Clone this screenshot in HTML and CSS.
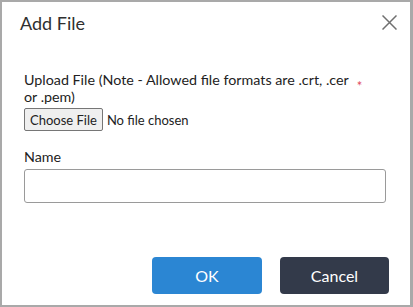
FILE: index.html
```html
<!DOCTYPE html>
<html lang="en">
<head>
    <meta charset="UTF-8">
    <meta name="viewport" content="width=device-width, initial-scale=1.0">
    <title>Add File</title>
    <link rel="stylesheet" href="styles.css">
</head>
<body>
<div class="dialog">
    <div class="dialog-header">
        <h2 class="dialog-title">Add File</h2>
        <button class="close-btn" aria-label="Close">
            <svg width="15" height="15" viewBox="0 0 15 15">
                <path d="M0.5 0.5 L14.5 14.5 M14.5 0.5 L0.5 14.5" stroke="#707070" stroke-width="1.5" fill="none"/>
            </svg>
        </button>
    </div>

    <div class="dialog-body">
        <div class="field-label-row">
            <label for="upload" class="field-label">Upload File (Note - Allowed file formats are .crt, .cer or .pem)</label>
            <span class="required">*</span>
        </div>
        <input type="file" id="upload" class="file-input">

        <label for="name" class="field-label name-label">Name</label>
        <input type="text" id="name" class="text-input">
    </div>

    <div class="dialog-footer">
        <button class="btn btn-primary">OK</button>
        <button class="btn btn-dark">Cancel</button>
    </div>
</div>
</body>
</html>
```

FILE: styles.css
```css
body {
    margin: 0;
    font-family: Lato, "Open Sans", sans-serif;
    background: #fff;
}
.dialog {
    width: 413px;
    height: 307px;
    box-sizing: border-box;
    border: 2px solid #a9a9a9;
    border-right-width: 3px;
    display: flex;
    flex-direction: column;
    background: #fff;
}
.dialog-header {
    display: flex;
    justify-content: space-between;
    align-items: flex-start;
    padding: 9px 13px 0 18px;
}
.dialog-title {
    margin: 0;
    font-size: 18px;
    line-height: 24px;
    font-weight: normal;
    color: #2f2f2f;
}
.close-btn {
    background: none;
    border: none;
    padding: 0;
    margin-top: 4px;
    cursor: pointer;
    line-height: 0;
}
.dialog-body {
    padding: 36px 24px 0 22px;
    display: flex;
    flex-direction: column;
    align-items: flex-start;
}
.field-label-row {
    display: flex;
    width: 100%;
}
.field-label {
    font-size: 14.3px;
    line-height: 17px;
    color: #222;
}
.field-label-row .field-label {
    width: 90%;
}
.required {
    color: #e04a5c;
    font-size: 13px;
    line-height: 13px;
    margin: 9px 0 0 7px;
}
.file-input {
    margin-top: 3px;
    font-family: Lato, sans-serif;
    font-size: 13px;
    color: #222;
}
.file-input::file-selector-button {
    font-family: Lato, sans-serif;
    font-size: 13px;
    height: 23px;
    padding: 0 5px;
    margin-right: 4px;
    border: 1px solid #767676;
    border-radius: 2px;
    background-color: #efefef;
    color: #222;
}
.name-label {
    margin-top: 17px;
}
.text-input {
    margin-top: 4px;
    width: 100%;
    height: 34px;
    box-sizing: border-box;
    border: 1px solid #9a9a9a;
    border-radius: 3px;
    font-family: Lato, sans-serif;
    font-size: 14px;
    padding: 0 8px;
}
.dialog-footer {
    margin-top: auto;
    display: flex;
    justify-content: flex-end;
    gap: 18px;
    padding: 0 21px 11px 0;
}
.btn {
    width: 110px;
    height: 37px;
    border: none;
    border-radius: 4px;
    color: #fff;
    font-family: Lato, sans-serif;
    font-size: 16px;
    cursor: pointer;
}
.btn-primary {
    background-color: #2b86d3;
}
.btn-dark {
    background-color: #333a4a;
    width: 109px;
}
```
